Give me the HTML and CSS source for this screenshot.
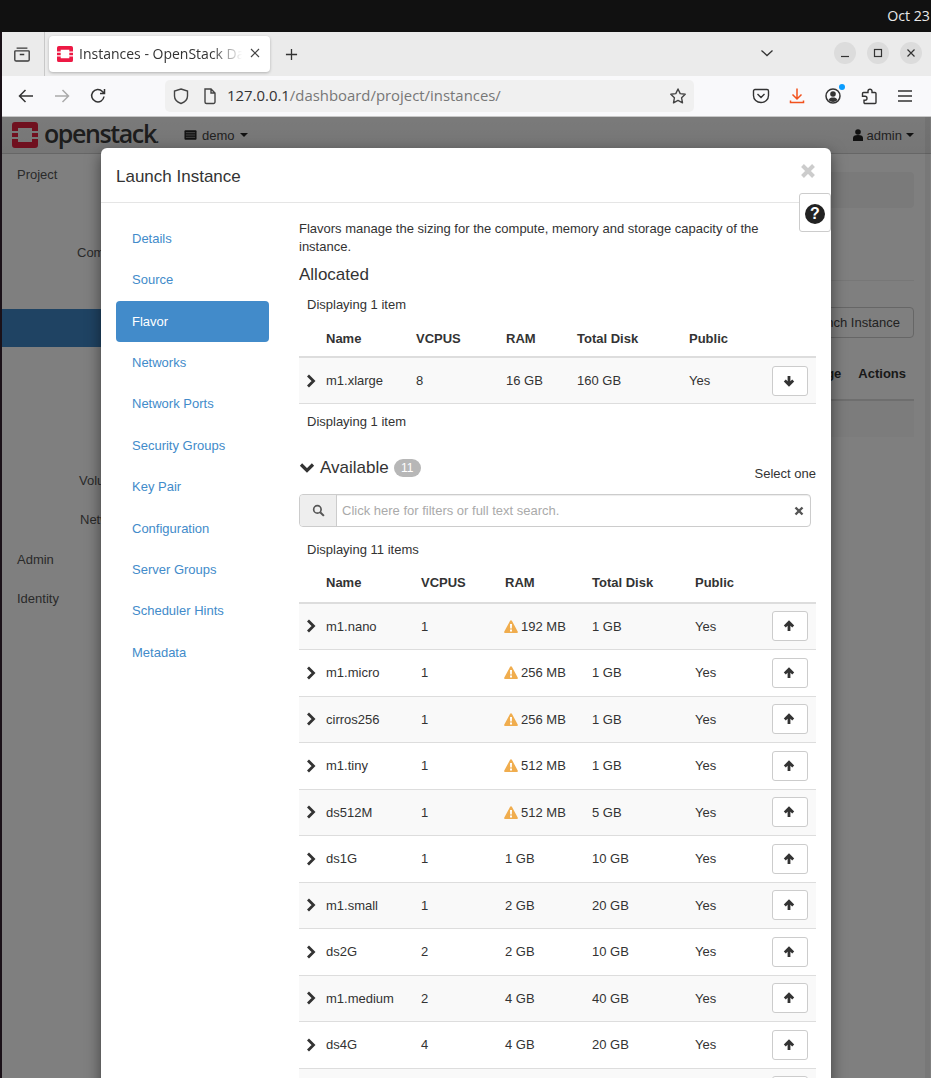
FILE: index.html
```html
<!DOCTYPE html>
<html lang="en">
<head>
<meta charset="utf-8">
<title>Instances - OpenStack Dashboard</title>
<link rel="stylesheet" href="styles.css">
</head>
<body>
<svg class="sprite" aria-hidden="true">
  <symbol id="i-chev" viewBox="0 0 10 14"><path d="M2 1.500 7.500 7 2 12.500" fill="none" stroke="currentColor" stroke-width="2.800"/></symbol>
  <symbol id="i-up" viewBox="0 0 12 12"><path d="M6 11V2.500M1.800 6.500 6 2.300l4.200 4.200" fill="none" stroke="currentColor" stroke-width="2.800"/></symbol>
  <symbol id="i-down" viewBox="0 0 12 12"><path d="M6 1v8.500M1.800 5.500 6 9.700l4.200-4.200" fill="none" stroke="currentColor" stroke-width="2.800"/></symbol>
  <symbol id="i-warn" viewBox="0 0 14 13"><path d="M7 .3c.4 0 .7.2.9.5l5.800 10.600c.4.7-.1 1.500-.9 1.500H1.200c-.8 0-1.300-.8-.9-1.500L6.100.8C6.300.5 6.600.3 7 .3z" fill="#f0ad4e"/><path d="M6 4h2l-.2 4.600H6.200zM6 9.600h2v1.800H6z" fill="#fff"/></symbol>
  <symbol id="i-logo" viewBox="0 0 26 26"><path d="M3 0h20a3 3 0 0 1 3 3v6h-6V6H6v3H0V3a3 3 0 0 1 3-3zM0 11h6v4H0zM20 11h6v4h-6zM0 17h6v3h14v-3h6v6a3 3 0 0 1-3 3H3a3 3 0 0 1-3-3z" fill="currentColor"/></symbol>
</svg>

<header class="sysbar"><span class="clock">Oct 23</span></header>

<div class="browser">
  <div class="tabbar">
    <span class="tabgroup">
      <svg class="ico20" viewBox="0 0 20 20"><path d="M4 3.500h12M2.800 6.500h14.400a.8.8 0 0 1 .8.8v9a1.500 1.500 0 0 1-1.500 1.500h-13A1.500 1.500 0 0 1 2 16.300v-9a.8.8 0 0 1 .8-.8zM7.500 10.500h5" fill="none" stroke="#3a3a3a" stroke-width="1.500"/></svg>
    </span>
    <div class="tab">
      <svg class="favicon"><use href="#i-logo"/></svg>
      <span class="tab-title">Instances - OpenStack Dashboard</span>
      <svg class="tab-close" viewBox="0 0 12 12"><path d="M2 2l8 8M10 2l-8 8" stroke="#444" stroke-width="1.200"/></svg>
    </div>
    <svg class="tab-new" viewBox="0 0 14 14"><path d="M7 1v12M1 7h12" stroke="#333" stroke-width="1.400"/></svg>
    <svg class="tab-list" viewBox="0 0 14 8"><path d="M1.500 1.500 7 6.500l5.500-5" fill="none" stroke="#333" stroke-width="1.300"/></svg>
    <div class="winctl">
      <span class="winbtn"><svg viewBox="0 0 10 10"><path d="M1 8.500h8" stroke="#333" stroke-width="1.200"/></svg></span>
      <span class="winbtn"><svg viewBox="0 0 10 10"><rect x="1.500" y="1.500" width="7" height="7" fill="none" stroke="#333" stroke-width="1.200"/></svg></span>
      <span class="winbtn"><svg viewBox="0 0 10 10"><path d="M1.500 1.500l7 7M8.500 1.500l-7 7" stroke="#333" stroke-width="1.200"/></svg></span>
    </div>
  </div>

  <div class="navbar">
    <svg class="nav-ico nav-back" viewBox="0 0 18 18"><path d="M16 9H2.500M8.500 3 2.500 9l6 6" fill="none" stroke="#333" stroke-width="1.500"/></svg>
    <svg class="nav-ico nav-fwd" viewBox="0 0 18 18"><path d="M2 9h13.500M9.500 3l6 6-6 6" fill="none" stroke="#aaa" stroke-width="1.500"/></svg>
    <svg class="nav-ico nav-reload" viewBox="0 0 18 18"><path d="M15 9.500A6.200 6.200 0 1 1 13.400 4.500L15.500 6.500M15.500 2v4.500H11" fill="none" stroke="#333" stroke-width="1.500"/></svg>
    <div class="urlbar">
      <svg class="nav-ico url-shield" viewBox="0 0 18 18"><path d="M9 2l6.500 2v5c0 3.500-2.500 6-6.500 7.500C5 15 2.500 12.500 2.500 9V4z" fill="none" stroke="#444" stroke-width="1.400"/></svg>
      <svg class="nav-ico url-page" viewBox="0 0 18 18"><path d="M4 2h6l4 4v9a1.500 1.500 0 0 1-1.500 1.500h-7A1.500 1.500 0 0 1 4 15zM10 2v4h4" fill="none" stroke="#444" stroke-width="1.400"/></svg>
      <span class="url"><span class="url-host">127.0.0.1</span>/dashboard/project/instances/</span>
      <svg class="nav-ico url-star" viewBox="0 0 18 18"><path d="M9 2l2.200 4.600 5 .7-3.600 3.500.9 5L9 13.400l-4.500 2.400.9-5L1.800 7.300l5-.7z" fill="none" stroke="#444" stroke-width="1.400" stroke-linejoin="round"/></svg>
    </div>
    <div class="nav-tools">
      <svg class="nav-ico" viewBox="0 0 18 18"><path d="M3 2.500h12A1.500 1.500 0 0 1 16.500 4v4.500c0 4-3.300 7-7.500 7s-7.500-3-7.500-7V4A1.500 1.500 0 0 1 3 2.500zM5.500 7 9 10.500 12.500 7" fill="none" stroke="#333" stroke-width="1.400"/></svg>
      <svg class="nav-ico" viewBox="0 0 18 18"><path d="M9 1.500V12M4.500 7.500 9 12l4.500-4.500M2.500 13.500v2h13v-2" fill="none" stroke="#f2521d" stroke-width="1.500"/></svg>
      <span class="account">
        <svg class="nav-ico" viewBox="0 0 18 18"><circle cx="9" cy="9" r="7" fill="none" stroke="#333" stroke-width="1.500"/><circle cx="9" cy="7" r="2.800" fill="#333"/><path d="M4.500 13c1-2 2.500-2.500 4.500-2.500s3.500.5 4.500 2.500c-1.200 1.300-2.800 2-4.500 2s-3.300-.7-4.500-2z" fill="#333"/></svg>
        <span class="account-dot"></span>
      </span>
      <svg class="nav-ico" viewBox="0 0 18 18"><path d="M10 2.200a2 2 0 0 1 2 2V5.500h3a1 1 0 0 1 1 1v9a1 1 0 0 1-1 1H5a1 1 0 0 1-1-1v-2.300h1a2 2 0 1 0 0-4H2.500V6.500a1 1 0 0 1 1-1H8V4.200a2 2 0 0 1 2-2z" fill="none" stroke="#333" stroke-width="1.400"/></svg>
      <svg class="nav-ico" viewBox="0 0 18 18"><path d="M2 4h14M2 9h14M2 14h14" stroke="#333" stroke-width="1.400"/></svg>
    </div>
  </div>

  <div class="page">
    <div class="site-nav">
      <svg class="site-logo"><use href="#i-logo"/></svg>
      <span class="site-name">openstack<span class="site-dot">.</span></span>
      <span class="site-project">
        <svg class="site-ico" viewBox="0 0 14 12"><rect x=".5" y="1" width="13" height="10" rx="1" fill="#222"/><path d="M2 3.500h10M2 6h10M2 8.500h10" stroke="#999" stroke-width="1"/></svg>
        demo <span class="caret"></span>
      </span>
      <span class="site-user">
        <svg class="site-ico user" viewBox="0 0 10 12"><circle cx="5" cy="3" r="2.800" fill="#222"/><path d="M0 12V9c0-2 1.500-3 5-3s5 1 5 3v3z" fill="#222"/></svg>
        admin <span class="caret"></span>
      </span>
    </div>
    <div class="site-body">
      <nav class="side">
        <div class="side-row">Project</div>
        <div class="side-gap-a"></div>
        <div class="side-row sub">Compute</div>
        <div class="side-gap-b"></div>
        <div class="side-active"></div>
        <div class="side-gap-c"></div>
        <div class="side-row sub2">Volumes</div>
        <div class="side-row sub3">Network</div>
        <div class="side-row">Admin</div>
        <div class="side-row">Identity</div>
      </nav>
      <main class="main">
        <div class="crumb"></div>
        <div class="rule"></div>
        <div class="actions-row"><span class="launch-btn">Launch Instance</span></div>
        <div class="bg-head"><span>Image Name</span><span>Age</span><span>Actions</span></div>
        <div class="bg-row"></div>
      </main>
    </div>
    <div class="scroll"></div>
    <div class="backdrop"></div>

    <section class="modal">
      <header class="modal-head">
        <h1 class="modal-title">Launch Instance</h1>
        <svg class="modal-x" viewBox="0 0 16 16"><path d="M2.500 2.500l11 11M13.500 2.500l-11 11" stroke="#ccc" stroke-width="4"/></svg>
      </header>
      <span class="help"><span class="help-disc">?</span></span>
      <div class="modal-body">
        <ul class="steps">
          <li>Details</li>
          <li>Source</li>
          <li class="on">Flavor</li>
          <li>Networks</li>
          <li>Network Ports</li>
          <li>Security Groups</li>
          <li>Key Pair</li>
          <li>Configuration</li>
          <li>Server Groups</li>
          <li>Scheduler Hints</li>
          <li>Metadata</li>
        </ul>
        <div class="pane">
          <p class="intro">Flavors manage the sizing for the compute, memory and storage capacity of the instance.</p>
          <h2 class="h-alloc">Allocated</h2>
          <div class="count count-top">Displaying 1 item</div>
          <div class="tbl alloc">
            <div class="row head"><span></span><span>Name</span><span>VCPUS</span><span>RAM</span><span>Total Disk</span><span>Public</span><span></span></div>
            <div class="row"><svg class="chev"><use href="#i-chev"/></svg><span>m1.xlarge</span><span>8</span><span>16 GB</span><span>160 GB</span><span>Yes</span><span class="mv"><svg><use href="#i-down"/></svg></span></div>
          </div>
          <div class="count count-bot">Displaying 1 item</div>

          <div class="avail-head">
            <svg class="avail-chev" viewBox="0 0 16 12"><path d="M2 2.500 8 8.500l6-6" fill="none" stroke="currentColor" stroke-width="3.200"/></svg>
            <h2 class="h-avail">Available</h2>
            <span class="badge">11</span>
            <span class="select-one">Select one</span>
          </div>
          <div class="search">
            <span class="search-add"><svg viewBox="0 0 14 14"><circle cx="5.800" cy="5.800" r="4" fill="none" stroke="#555" stroke-width="1.800"/><path d="M8.800 8.800l4 4" stroke="#555" stroke-width="2.200"/></svg></span>
            <span class="search-ph">Click here for filters or full text search.</span>
            <svg class="search-x" viewBox="0 0 10 10"><path d="M1.500 1.500l7 7M8.500 1.500l-7 7" stroke="#555" stroke-width="2.400"/></svg>
          </div>
          <div class="count count-avail">Displaying 11 items</div>
          <div class="tbl avail">
            <div class="row head"><span></span><span>Name</span><span>VCPUS</span><span>RAM</span><span>Total Disk</span><span>Public</span><span></span></div>
            <div class="row"><svg class="chev"><use href="#i-chev"/></svg><span>m1.nano</span><span>1</span><span><svg class="warn"><use href="#i-warn"/></svg>192 MB</span><span>1 GB</span><span>Yes</span><span class="mv"><svg><use href="#i-up"/></svg></span></div>
            <div class="row"><svg class="chev"><use href="#i-chev"/></svg><span>m1.micro</span><span>1</span><span><svg class="warn"><use href="#i-warn"/></svg>256 MB</span><span>1 GB</span><span>Yes</span><span class="mv"><svg><use href="#i-up"/></svg></span></div>
            <div class="row"><svg class="chev"><use href="#i-chev"/></svg><span>cirros256</span><span>1</span><span><svg class="warn"><use href="#i-warn"/></svg>256 MB</span><span>1 GB</span><span>Yes</span><span class="mv"><svg><use href="#i-up"/></svg></span></div>
            <div class="row"><svg class="chev"><use href="#i-chev"/></svg><span>m1.tiny</span><span>1</span><span><svg class="warn"><use href="#i-warn"/></svg>512 MB</span><span>1 GB</span><span>Yes</span><span class="mv"><svg><use href="#i-up"/></svg></span></div>
            <div class="row"><svg class="chev"><use href="#i-chev"/></svg><span>ds512M</span><span>1</span><span><svg class="warn"><use href="#i-warn"/></svg>512 MB</span><span>5 GB</span><span>Yes</span><span class="mv"><svg><use href="#i-up"/></svg></span></div>
            <div class="row"><svg class="chev"><use href="#i-chev"/></svg><span>ds1G</span><span>1</span><span>1 GB</span><span>10 GB</span><span>Yes</span><span class="mv"><svg><use href="#i-up"/></svg></span></div>
            <div class="row"><svg class="chev"><use href="#i-chev"/></svg><span>m1.small</span><span>1</span><span>2 GB</span><span>20 GB</span><span>Yes</span><span class="mv"><svg><use href="#i-up"/></svg></span></div>
            <div class="row"><svg class="chev"><use href="#i-chev"/></svg><span>ds2G</span><span>2</span><span>2 GB</span><span>10 GB</span><span>Yes</span><span class="mv"><svg><use href="#i-up"/></svg></span></div>
            <div class="row"><svg class="chev"><use href="#i-chev"/></svg><span>m1.medium</span><span>2</span><span>4 GB</span><span>40 GB</span><span>Yes</span><span class="mv"><svg><use href="#i-up"/></svg></span></div>
            <div class="row"><svg class="chev"><use href="#i-chev"/></svg><span>ds4G</span><span>4</span><span>4 GB</span><span>20 GB</span><span>Yes</span><span class="mv"><svg><use href="#i-up"/></svg></span></div>
            <div class="row"><span></span><span></span><span></span><span></span><span></span><span></span><span class="mv"><svg><use href="#i-up"/></svg></span></div>
          </div>
        </div>
      </div>
    </section>
  </div>
</div>
</body>
</html>
```
FILE: styles.css
```css
* { box-sizing: border-box; }
html, body { margin: 0; height: 1078px; overflow: hidden; }
body {
  background: #1a1118;
  font-family: "Liberation Sans", Arial, sans-serif;
  font-size: 13px;
  color: #333;
  display: flex;
  flex-direction: column;
}
.sprite { display: none; }

/* system bar */
.sysbar {
  height: 32px;
  background: #111;
  display: flex;
  justify-content: flex-end;
  align-items: center;
  flex: none;
  padding-bottom: 2px;
}
.clock { color: #e8e8e8; font: 14.200px "Open Sans", sans-serif; margin-right: 1px; white-space: nowrap; }

.browser { flex: 1; margin-left: 2px; display: flex; flex-direction: column; min-height: 0; }

/* tabs */
.tabbar {
  height: 44px;
  flex: none;
  background: #ebebeb;
  display: flex;
  align-items: center;
}
.tabgroup {
  width: 43px;
  height: 44px;
  border-right: 1px solid #c8c8c8;
  display: flex;
  align-items: center;
  justify-content: center;
  flex: none;
  padding-right: 2px;
}
.ico20 { width: 18px; height: 18px; }
.tab {
  margin-left: 4px;
  width: 221px;
  height: 36px;
  background: #fff;
  border-radius: 4px;
  box-shadow: 0 1px 3px rgba(0,0,0,.25);
  display: flex;
  align-items: center;
  padding-left: 8px;
  position: relative;
  flex: none;
}
.favicon { width: 16px; height: 16px; color: #ed1944; flex: none; }
.tab-title {
  margin-left: 6px;
  margin-top: -2px;
  font: 14px "Open Sans", sans-serif;
  color: #333;
  white-space: nowrap;
  overflow: hidden;
  width: 170px;
  -webkit-mask-image: linear-gradient(to right, #000 78%, transparent 96%);
  mask-image: linear-gradient(to right, #000 78%, transparent 96%);
}
.tab-close { width: 12px; height: 12px; position: absolute; right: 9px; top: 11px; }
.tab-new { width: 13px; height: 13px; margin-left: 15px; flex: none; }
.tab-list { width: 14px; height: 8px; margin-left: 462px; margin-top: -3px; flex: none; }
.winctl { display: flex; gap: 11px; margin-left: 60px; margin-top: -2px; }
.winbtn {
  width: 22px;
  height: 22px;
  background: #dcdcdc;
  border-radius: 50%;
  display: flex;
  align-items: center;
  justify-content: center;
}
.winbtn svg { width: 10px; height: 10px; }

/* toolbar */
.navbar {
  height: 41px;
  flex: none;
  background: #f9f9fb;
  border-bottom: 1px solid #c8c8c8;
  display: flex;
  align-items: center;
  padding-left: 15px;
  padding-bottom: 1px;
}
.nav-ico { width: 18px; height: 18px; flex: none; display: block; }
.nav-fwd { margin-left: 18px; }
.nav-reload { margin-left: 18px; }
.urlbar {
  margin-left: 58px;
  width: 529px;
  height: 32px;
  background: #f0f0f0;
  border-radius: 5px;
  display: flex;
  align-items: center;
  padding-left: 7px;
  flex: none;
}
.url-page { margin-left: 11px; }
.url { margin-left: 8px; margin-top: -1px; font: 14.900px "Open Sans", sans-serif; color: #777; white-space: nowrap; width: 442px; }
.url-host { color: #333; }
.nav-tools { display: flex; gap: 18px; margin-left: 58px; align-items: center; }
.account { position: relative; display: block; }
.account-dot { position: absolute; right: -3px; top: -3px; width: 6px; height: 6px; border-radius: 50%; background: #0a9dff; }

/* page behind the modal */
.page { flex: 1; position: relative; background: #fff; min-height: 0; overflow: hidden; }
.site-nav {
  height: 37px;
  background: linear-gradient(#f5f5f5, #ececec);
  border-bottom: 1px solid #ccc;
  display: flex;
  align-items: center;
  padding-left: 10px;
  padding-right: 17px;
}
.site-logo { width: 26px; height: 26px; color: #e0213f; flex: none; }
.site-name { margin-left: 6px; font: 600 25px/1 "Open Sans", sans-serif; letter-spacing: -1.400px; color: #3a3a3a; width: 140px; padding-bottom: 4px; white-space: nowrap; }
.site-dot { font-size: 12px; }
.site-project { display: flex; align-items: center; gap: 5px; font-size: 13px; color: #444; }
.site-ico { width: 13px; height: 12px; }
.site-ico.user { width: 10px; }
.site-user { margin-left: auto; display: flex; align-items: center; gap: 4px; font-size: 13px; color: #444; }
.caret { width: 0; height: 0; border: 4px solid transparent; border-top-color: #222; border-bottom: 0; }
.site-body { display: flex; }
.side { width: 200px; flex: none; font-size: 13px; color: #555; }
.side-row { height: 39px; padding-left: 15px; padding-top: 1px; display: flex; align-items: center; white-space: nowrap; }
.side-row.sub { padding-left: 75px; }
.side-row.sub2 { padding-left: 77px; padding-top: 0; }
.side-row.sub3 { padding-left: 78px; padding-top: 0; }
.side-gap-a { height: 39px; }
.side-gap-b { height: 38px; }
.side-active { height: 38px; background: #3f87c7; }
.side-gap-c { height: 114px; }
.main { flex: 1; padding: 18px 17px 0 0; min-width: 0; }
.crumb { height: 36px; background: #f5f5f5; border-radius: 4px; }
.rule { margin-top: 72px; height: 1px; background: #eee; }
.actions-row { margin-top: 26px; display: flex; justify-content: flex-end; }
.launch-btn { height: 31px; padding: 0 13px; border: 1px solid #ccc; border-radius: 4px; display: flex; align-items: center; font-size: 13px; color: #444; }
.bg-head { height: 63px; border-bottom: 2px solid #ddd; display: flex; justify-content: flex-end; align-items: center; gap: 17px; padding-right: 8px; font-weight: 700; font-size: 13px; padding-top: 9px; }
.bg-row { height: 36px; background: #f9f9f9; }
.scroll { position: absolute; top: 0; right: 1px; bottom: 0; width: 5px; background: rgba(0,0,0,.06); }
.backdrop { position: absolute; inset: 0; background: rgba(0,0,0,.5); }

/* modal */
.modal {
  position: absolute;
  left: 99px;
  top: 31px;
  width: 730px;
  height: 1100px;
  background: #fff;
  border-radius: 6px;
  box-shadow: 0 5px 15px rgba(0,0,0,.5);
}
.modal-head {
  height: 55px;
  border-bottom: 1px solid #e5e5e5;
  padding: 4px 0 0 15px;
  display: flex;
  align-items: center;
  position: relative;
}
.modal-title { margin: 0; font-size: 17px; font-weight: 400; color: #333; }
.modal-x { position: absolute; right: 15px; top: 15px; width: 16px; height: 16px; }
.help {
  position: absolute;
  right: 0;
  top: 45px;
  width: 32px;
  height: 39px;
  background: #fff;
  border: 1px solid #ccc;
  border-radius: 3px;
  display: flex;
  align-items: center;
  justify-content: center;
  padding-top: 2px;
}
.help-disc {
  width: 20px;
  height: 20px;
  border-radius: 50%;
  background: #222;
  color: #fff;
  font-weight: 700;
  font-size: 16px;
  line-height: 20px;
  text-align: center;
}
.modal-body { display: flex; padding: 0 15px; }
.steps { list-style: none; margin: 14.800px 0 0; padding: 0; width: 153px; flex: none; color: #428bca; }
.steps li { height: 41.400px; padding-left: 16px; line-height: 41px; border-radius: 4px; white-space: nowrap; }
.steps li.on { background: #428bca; color: #fff; }
.pane { margin-left: 30px; width: 517px; flex: none; padding-top: 17px; }
.intro { margin: 0; line-height: 18px; padding-right: 40px; }
.h-alloc, .h-avail { margin: 0; font-size: 17px; font-weight: 400; line-height: 20px; }
.h-alloc { margin-top: 9px; }
.count { padding-left: 8px; line-height: 18px; }
.count-top { margin-top: 11px; }
.count-bot { margin-top: 9px; }
.count-avail { margin-top: 14px; }
.row {
  display: grid;
  height: 46.500px;
  align-items: center;
  border-bottom: 1px solid #ddd;
}
.alloc .row { grid-template-columns: 27px 90px 90px 71px 112px 1fr 44px; height: 46px; }
.avail .row { grid-template-columns: 27px 95px 84px 87px 103px 1fr 44px; }
.row:nth-child(even) { background: #f9f9f9; }
.alloc .row.head { height: 43px; margin-top: 1px; background: none; font-weight: 700; border-bottom: 2px solid #ddd; padding-top: 5px; }
.avail .row.head { height: 44.500px; background: none; font-weight: 700; border-bottom: 2px solid #ddd; padding-top: 5px; }
.chev { width: 10px; height: 14px; margin-left: 7px; color: #333; }
.warn { width: 14px; height: 13px; vertical-align: -2px; margin-right: 3px; margin-left: -1px; }
.mv {
  width: 36px;
  height: 30px;
  background: #fff;
  border: 1px solid #ccc;
  border-radius: 3px;
  display: flex;
  align-items: center;
  justify-content: center;
  padding-right: 3px;
}
.mv svg { width: 12px; height: 12px; color: #333; }
.avail-head { display: flex; align-items: center; margin-top: 25px; height: 24px; }
.avail-chev { width: 16px; height: 12px; color: #333; flex: none; }
.h-avail { margin-left: 5px; }
.badge { margin-left: 5px; width: 27px; height: 18px; border-radius: 9px; background: #b7b7b7; color: #fff; font-size: 12px; line-height: 18px; text-align: center; }
.select-one { margin-left: auto; padding-top: 10px; }
.search {
  margin-top: 14px;
  width: 512px;
  height: 33px;
  border: 1px solid #ccc;
  border-radius: 4px;
  display: flex;
  align-items: center;
  box-shadow: inset 0 1px 1px rgba(0,0,0,.075);
}
.search-add { width: 37px; height: 31px; background: #eee; border-right: 1px solid #ccc; display: flex; align-items: center; justify-content: center; border-radius: 3px 0 0 3px; flex: none; }
.search-add svg { width: 13px; height: 13px; }
.search-ph { margin-left: 5px; color: #aaa; white-space: nowrap; }
.search-x { width: 10px; height: 10px; margin-left: auto; margin-right: 6px; }
```
